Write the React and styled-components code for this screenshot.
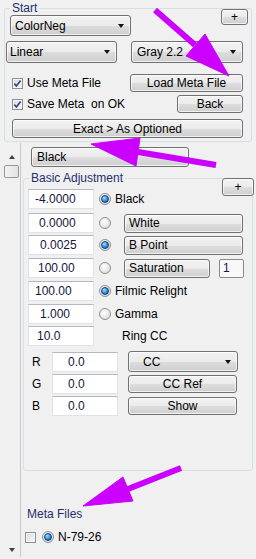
import React from 'react'
import styled, { createGlobalStyle } from 'styled-components'

const GlobalStyle = createGlobalStyle`
  html, body {
    margin: 0;
    padding: 0;
    background: #f0f0f0;
  }
  body {
    font-family: "Liberation Sans", Arial, sans-serif;
    font-size: 12px;
    color: #000;
  }
`

const PURPLE = '#cc00ff'

const Window = styled.div`
  position: relative;
  box-sizing: border-box;
  width: 256px;
  height: 559px;
  padding-top: 1px;
  overflow: hidden;
  background: #f0f0f0;
`

const Group = styled.fieldset`
  min-width: 0;
  margin: 0 ${p => p.$mr}px 0 ${p => p.$ml}px;
  padding: 0 0 ${p => p.$pb || 0}px 0;
  border: 1px solid #d5dfe5;
  border-radius: 3px;
`

const Legend = styled.legend`
  margin-left: 5px;
  padding: 0 2px;
  line-height: 14px;
  color: #1e2f6b;
`

const Row = styled.div`
  display: flex;
  align-items: ${p => p.$align || 'center'};
  margin-top: ${p => p.$mt || 0}px;
`

const face = `
  border: 1px solid #707070;
  border-radius: 3px;
  background: linear-gradient(#f2f2f2 0%, #ebebeb 50%, #dddddd 51%, #cfcfcf 100%);
  box-shadow: inset 0 0 0 1px rgba(255, 255, 255, 0.7);
`

const Button = styled.div`
  box-sizing: border-box;
  flex: none;
  display: flex;
  align-items: center;
  justify-content: ${p => (p.$left ? 'flex-start' : 'center')};
  width: ${p => p.$w}px;
  height: ${p => p.$h}px;
  margin-left: ${p => p.$ml || 0}px;
  margin-top: ${p => p.$mt || 0}px;
  padding-left: ${p => p.$pad || 0}px;
  ${face}
  color: #000;
  white-space: nowrap;
`

const Combo = styled(Button)`
  justify-content: space-between;
  padding-right: 6px;
`

const Caret = styled.span`
  width: 0;
  height: 0;
  border-left: 3.5px solid transparent;
  border-right: 3.5px solid transparent;
  border-top: 4px solid #111;
`

const CheckBox = styled.span`
  box-sizing: border-box;
  flex: none;
  display: flex;
  align-items: center;
  justify-content: center;
  width: 11px;
  height: 11px;
  margin-left: ${p => p.$ml || 0}px;
  border: 1px solid #8e8f8f;
  background: linear-gradient(135deg, #d8d8d8, #fbfbfb);
  box-shadow: inset 0 0 0 1px #f6f6f6;
`

const Radio = styled.span`
  box-sizing: border-box;
  flex: none;
  display: flex;
  align-items: center;
  justify-content: center;
  width: 12px;
  height: 12px;
  margin-left: ${p => p.$ml || 0}px;
  border-radius: 50%;
  border: 1px solid #8e8f8f;
  background: radial-gradient(circle at 40% 35%, #ffffff, #e4e4e4 65%, #cfcfcf);

  &::after {
    content: '';
    display: ${p => (p.$on ? 'block' : 'none')};
    width: 6px;
    height: 6px;
    border-radius: 50%;
    border: 1px solid #0e3f78;
    background: radial-gradient(circle at 35% 30%, #9fe0ff, #2a86d8 60%, #0c4f9a);
  }
`

const Label = styled.span`
  margin-left: ${p => p.$ml || 0}px;
  white-space: nowrap;
  color: ${p => p.$color || '#000'};
`

const NumBox = styled.div`
  box-sizing: border-box;
  flex: none;
  width: ${p => p.$w}px;
  height: 20px;
  margin-left: ${p => p.$ml || 0}px;
  padding-left: ${p => p.$pad}px;
  border: 1px solid #dfe3e8;
  border-top-color: #b5b8bf;
  background: #fff;
  line-height: 18px;
  color: #15153d;
  white-space: nowrap;
`

const SmallBox = styled.div`
  box-sizing: border-box;
  width: 25px;
  height: 19px;
  margin-left: 9px;
  padding-left: 3px;
  border: 1px solid #8a8a8a;
  border-radius: 2px;
  background: #f8f8f8;
  line-height: 17px;
  color: #2a1050;
`

const Lower = styled.div`
  display: flex;
  height: 414px;
  margin: 1px 2px 0 3px;
`

const ScrollBar = styled.div`
  box-sizing: border-box;
  flex: none;
  display: flex;
  flex-direction: column;
  align-items: center;
  width: 18px;
  border-right: 1px solid #c9c9c9;
`

const ScrollArrow = styled.span`
  width: 0;
  height: 0;
  margin-top: ${p => p.$mt}px;
  border-left: 3.5px solid transparent;
  border-right: 3.5px solid transparent;
  ${p => (p.$down ? 'border-top: 4px solid #404040;' : 'border-bottom: 4px solid #404040;')}
`

const Thumb = styled.span`
  box-sizing: border-box;
  width: 15px;
  height: 13px;
  margin-top: 6px;
  border: 1px solid #979797;
  border-radius: 2px;
  background: linear-gradient(90deg, #f3f3f3, #e2e2e2);
`

const Content = styled.div`
  flex: 1;
  min-width: 0;
  display: flex;
  flex-direction: column;
`

const Overlay = styled.svg`
  position: absolute;
  left: 0;
  top: 0;
  pointer-events: none;
`

const Tick = () => (
  <svg width="9" height="9" viewBox="0 0 9 9">
    <path d="M1.3 4.6 L3.4 7 L7.6 1.4" stroke="#2f4a86" strokeWidth="1.7" fill="none" />
  </svg>
)

const adjustments = [
  { value: '-4.0000', pad: 6, mt: 4, on: true, label: 'Black' },
  { value: '0.0000', pad: 10, mt: 4, button: 'White' },
  { value: '0.0025', pad: 11, mt: 2, on: true, button: 'B Point' },
  { value: '100.00', pad: 9, mt: 3, button: 'Saturation', extra: '1' },
  { value: '100.00', pad: 6, mt: 3, on: true, label: 'Filmic Relight' },
  { value: '1.000', pad: 11, mt: 3, label: 'Gamma' },
  { value: '10.0', pad: 8, mt: 2, label: 'Ring CC', noRadio: true },
]

const arrows = [
  { from: [155, 10], base: [195, 45], tip: [229, 76], a: [205, 34], b: [186, 56] },
  { from: [216, 165], base: [138, 152], tip: [91, 144], a: [140, 138], b: [136, 166] },
  { from: [181, 468], base: [128, 489], tip: [83, 506], a: [123, 477], b: [133, 501] },
]

const AdjustRow = ({ value, pad, mt, on, label, button, extra, noRadio }) => (
  <Row $mt={mt}>
    <NumBox $w={66} $ml={4} $pad={pad}>{value}</NumBox>
    {noRadio ? null : <Radio $ml={5} $on={on} />}
    {label && <Label $ml={noRadio ? 28 : 4}>{label}</Label>}
    {button && (
      <Button $left $w={extra ? 86 : 119} $h={19} $ml={13} $pad={4}>{button}</Button>
    )}
    {extra && <SmallBox>{extra}</SmallBox>}
  </Row>
)

const ColorRow = ({ name, value, mt, children }) => (
  <Row $mt={mt}>
    <Label $ml={8} style={{ width: 16 }}>{name}</Label>
    <NumBox $w={66} $ml={4} $pad={15}>{value}</NumBox>
    {children}
  </Row>
)

const App = () => (
  <Window>
    <GlobalStyle />
    <Group $ml={4} $mr={4} $pb={3}>
      <Legend>Start</Legend>
      <Row $align="flex-start">
        <Combo $w={121} $h={21} $ml={5} $pad={4}>
          ColorNeg
          <Caret />
        </Combo>
        <Button $w={27} $h={16} $mt={-6} style={{ marginLeft: 'auto', marginRight: 3 }}>+</Button>
      </Row>
      <Row $mt={5}>
        <Combo $w={111} $h={22} $ml={1} $pad={3}>
          Linear
          <Caret />
        </Combo>
        <Combo $w={112} $h={22} $ml={14} $pad={5}>
          Gray 2.2
          <Caret />
        </Combo>
      </Row>
      <Row $mt={11}>
        <CheckBox $ml={7}><Tick /></CheckBox>
        <Label $ml={4} style={{ width: 94 }}>Use Meta File</Label>
        <Button $w={113} $h={18} $ml={9}>Load Meta File</Button>
      </Row>
      <Row $mt={3}>
        <CheckBox $ml={7}><Tick /></CheckBox>
        <Label $ml={4}>Save Meta&nbsp;&nbsp;on OK</Label>
        <Button $w={66} $h={18} style={{ marginLeft: 'auto', marginRight: 8 }}>Back</Button>
      </Row>
      <Row $mt={6}>
        <Button $w={231} $h={19} $ml={7}>Exact &gt; As Optioned</Button>
      </Row>
    </Group>

    <Lower>
      <ScrollBar>
        <ScrollArrow $mt={12} />
        <Thumb />
        <div style={{ flex: 1 }} />
        <ScrollArrow $down $mt={0} style={{ marginBottom: 5 }} />
      </ScrollBar>
      <Content>
        <Button $left $w={158} $h={20} $ml={10} $mt={4} $pad={5}>Black</Button>
        <Group $ml={2} $mr={1} $pb={0} style={{ marginTop: 4, height: 300, boxSizing: 'border-box' }}>
          <Legend>Basic Adjustment</Legend>
          <Row style={{ justifyContent: 'flex-end', marginTop: -7 }}>
            <Button $w={32} $h={18} style={{ marginRight: -2 }}>+</Button>
          </Row>
          <div style={{ marginTop: -11 }}>
            {adjustments.map((row, idx) => (
              <AdjustRow key={idx} {...row} />
            ))}
          </div>
          <ColorRow name="R" value="0.0" mt={5}>
            <Combo $w={110} $h={21} $ml={10} $pad={14}>
              CC
              <Caret />
            </Combo>
          </ColorRow>
          <ColorRow name="G" value="0.0" mt={2}>
            <Button $w={109} $h={18} $ml={10}>CC Ref</Button>
          </ColorRow>
          <ColorRow name="B" value="0.0" mt={2}>
            <Button $w={109} $h={18} $ml={10}>Show</Button>
          </ColorRow>
        </Group>
        <Label $ml={6} $color="#1e2f6b" style={{ marginTop: 36, lineHeight: '14px' }}>Meta Files</Label>
        <Row $mt={9}>
          <CheckBox $ml={4} />
          <Radio $ml={6} $on />
          <Label $ml={4}>N-79-26</Label>
        </Row>
      </Content>
    </Lower>

    <Overlay width="256" height="559" viewBox="0 0 256 559">
      {arrows.map(({ from, base, tip, a, b }, idx) => (
        <g key={idx} fill={PURPLE} stroke={PURPLE}>
          <line x1={from[0]} y1={from[1]} x2={base[0]} y2={base[1]} strokeWidth="6" />
          <polygon points={`${a.join(',')} ${tip.join(',')} ${b.join(',')}`} strokeWidth="1" />
        </g>
      ))}
    </Overlay>
  </Window>
)

export default App
